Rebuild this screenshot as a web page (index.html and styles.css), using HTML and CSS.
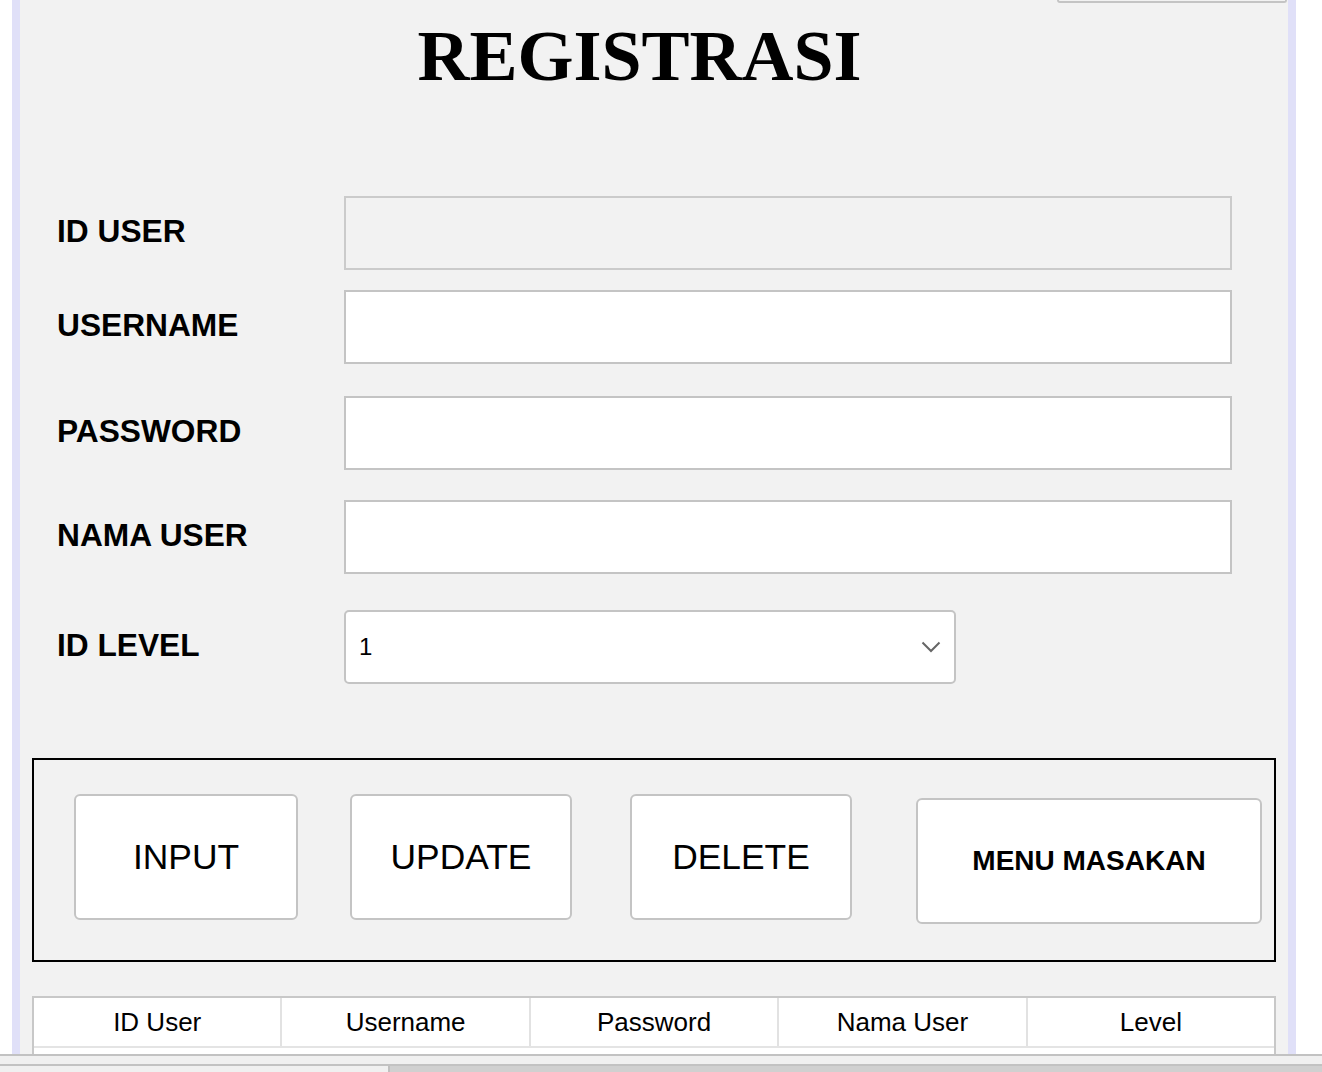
FILE: index.html
```html
<!DOCTYPE html>
<html lang="id">
<head>
<meta charset="utf-8">
<title>Registrasi</title>
<link rel="stylesheet" href="styles.css">
</head>
<body>
<div class="window">
  <div class="frame">
    <div class="strip"></div>
    <div class="panel">
      <div class="topbtn"></div>
      <h1 class="title">REGISTRASI</h1>
      <div class="form">
        <div class="row r1">
          <div class="label">ID USER</div>
          <div class="field disabled"></div>
        </div>
        <div class="row r2">
          <div class="label">USERNAME</div>
          <div class="field"></div>
        </div>
        <div class="row r3">
          <div class="label">PASSWORD</div>
          <div class="field"></div>
        </div>
        <div class="row r4">
          <div class="label">NAMA USER</div>
          <div class="field"></div>
        </div>
        <div class="row r5">
          <div class="label">ID LEVEL</div>
          <div class="select">
            <span class="select-value">1</span>
            <svg class="chev" width="20" height="12" viewBox="0 0 20 12"><path d="M1.5 1.5 L10 10 L18.5 1.5" fill="none" stroke="#666" stroke-width="2"/></svg>
          </div>
        </div>
      </div>
      <div class="actions">
        <div class="btn b-input">INPUT</div>
        <div class="btn b-update">UPDATE</div>
        <div class="btn b-delete">DELETE</div>
        <div class="btn b-menu">MENU MASAKAN</div>
      </div>
      <div class="table">
        <div class="thead">
          <div class="th">ID User</div>
          <div class="th">Username</div>
          <div class="th">Password</div>
          <div class="th">Nama User</div>
          <div class="th">Level</div>
        </div>
        <div class="tbody"></div>
      </div>
    </div>
    <div class="strip"></div>
  </div>
</div>
<div class="statusbar">
  <div class="status-strip"></div>
  <div class="scroll">
    <div class="scroll-left"></div>
    <div class="scroll-right"></div>
  </div>
</div>
</body>
</html>
```

FILE: styles.css
```css
html, body {
  margin: 0;
  padding: 0;
  background: #ffffff;
}
body {
  width: 1322px;
  height: 1072px;
  overflow: hidden;
  font-family: "Liberation Sans", Arial, sans-serif;
  color: #000;
}
.window {
  height: 1054px;
  overflow: hidden;
}
.frame {
  display: flex;
  margin-left: 12px;
  height: 1200px;
}
.strip {
  width: 8px;
  background: #e0e0f8;
  flex: none;
}
.panel {
  width: 1268px;
  flex: none;
  background: #f2f2f2;
  display: flex;
  flex-direction: column;
}
.topbtn {
  width: 226px;
  height: 1px;
  margin-left: 1037px;
  border: 2px solid #c4c4c4;
  border-top: none;
  border-radius: 0 0 6px 6px;
  background: #f2f2f2;
  flex: none;
}
.title {
  margin: 17px 0 0 0;
  padding-right: 29px;
  font-family: "Liberation Serif", "Times New Roman", serif;
  font-weight: bold;
  font-size: 72px;
  line-height: 72px;
  text-align: center;
}
.form {
  margin-top: 104px;
  padding-left: 37px;
  display: flex;
  flex-direction: column;
}
.row {
  display: flex;
  align-items: center;
  height: 74px;
}
.r2 { margin-top: 20px; }
.r3 { margin-top: 32px; }
.r4 { margin-top: 30px; }
.r5 { margin-top: 36px; }
.label {
  width: 287px;
  flex: none;
  font-weight: bold;
  font-size: 31.7px;
  margin-top: -3px;
}
.field {
  width: 884px;
  height: 70px;
  border: 2px solid #c4c4c4;
  background: #ffffff;
}
.field.disabled {
  background: #f2f2f2;
  border-color: #cbcbcb;
}
.select {
  height: 70px;
  border: 2px solid #c4c4c4;
  border-radius: 5px;
  background: #ffffff;
  display: flex;
  align-items: center;
  justify-content: space-between;
  padding: 0 13px 0 13px;
  box-sizing: content-box;
  width: 582px;
}
.select-value {
  font-size: 24px;
}
.chev {
  display: block;
}
.actions {
  margin: 74px 0 0 12px;
  width: 1240px;
  height: 200px;
  border: 2px solid #000;
  display: flex;
  align-items: flex-start;
}
.btn {
  background: #ffffff;
  border: 2px solid #c4c4c4;
  border-radius: 6px;
  height: 122px;
  display: flex;
  align-items: center;
  justify-content: center;
  font-size: 35.4px;
  margin-top: 34px;
  flex: none;
}
.b-input { width: 220px; margin-left: 40px; }
.b-update { width: 218px; margin-left: 52px; }
.b-delete { width: 218px; margin-left: 58px; }
.b-menu {
  width: 342px;
  margin-left: 64px;
  margin-top: 38px;
  font-size: 28px;
  font-weight: bold;
}
.table {
  margin: 34px 0 0 12px;
  width: 1240px;
  border: 2px solid #c8c8c8;
  background: #ffffff;
}
.thead {
  display: flex;
  height: 48px;
  border-bottom: 2px solid #e4e4e4;
}
.th {
  flex: 1;
  display: flex;
  align-items: center;
  justify-content: center;
  font-size: 26px;
  border-left: 2px solid #e2e2e2;
}
.th:first-child {
  border-left: none;
}
.tbody {
  height: 60px;
  background: #ffffff;
}
.statusbar {
  border-top: 2px solid #c2c2c2;
}
.status-strip {
  height: 8px;
  background: #f0f0f0;
}
.scroll {
  display: flex;
  height: 6px;
  border-top: 2px solid #c2c2c2;
}
.scroll-left {
  width: 388px;
  background: #f0f0f0;
  border-right: 2px solid #c0c0c0;
}
.scroll-right {
  flex: 1;
  background: #d0d0d0;
}
```
